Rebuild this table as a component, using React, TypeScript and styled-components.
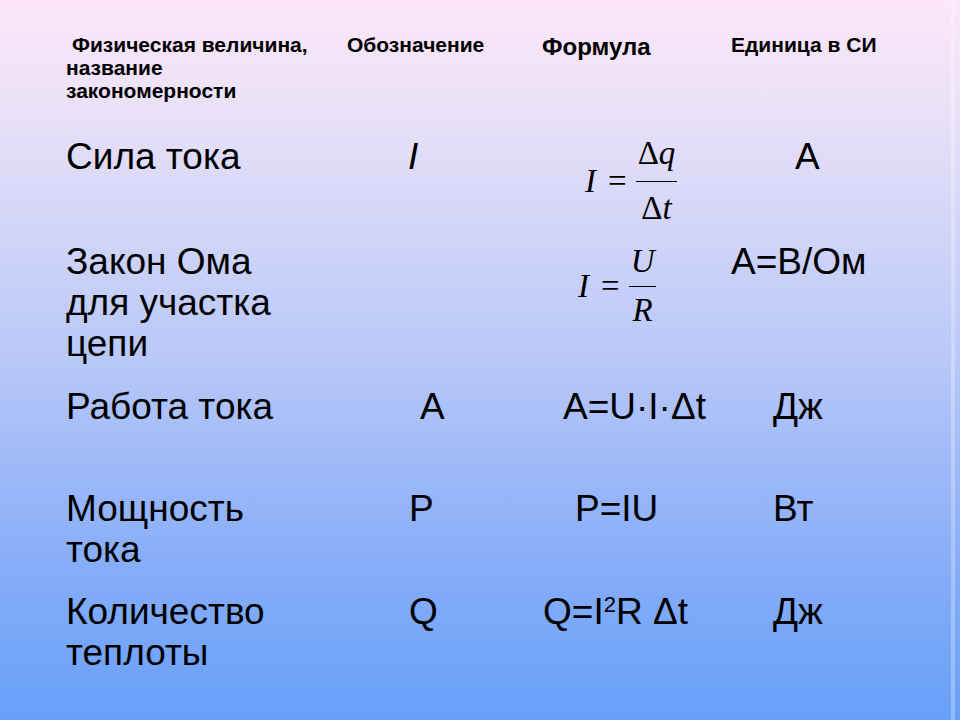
import styled, { createGlobalStyle } from 'styled-components';

const GlobalStyle = createGlobalStyle`
  html, body {
    margin: 0;
    padding: 0;
  }
  body {
    font-family: "Liberation Sans", Arial, sans-serif;
    color: #000;
  }
`;

const App = () => (
  <>
    <GlobalStyle />
    <Slide>
      <Table>
        <HeadCell $first>
          Физическая величина,
          <br />
          название
          <br />
          закономерности
        </HeadCell>
        <HeadCell>Обозначение</HeadCell>
        <HeadCell $big>Формула</HeadCell>
        <HeadCell>Единица в СИ</HeadCell>

        <Cell>Сила тока</Cell>
        <Cell $indent={61}>
          <Italic>I</Italic>
        </Cell>
        <Cell $indent={43}>
          <Formula>
            <Var>I</Var>
            <Eq>=</Eq>
            <Frac>
              <Num $gap={11}>
                Δ<Var>q</Var>
              </Num>
              <Bar />
              <Den $gap={10}>
                Δ<Var>t</Var>
              </Den>
            </Frac>
          </Formula>
        </Cell>
        <Cell $indent={64}>А</Cell>

        <Cell>
          Закон Ома
          <br />
          для участка
          <br />
          цепи
        </Cell>
        <Cell />
        <Cell $indent={36}>
          <Formula $lift={4}>
            <Var>I</Var>
            <Eq>=</Eq>
            <Frac>
              <Num $gap={8}>
                <Var>U</Var>
              </Num>
              <Bar />
              <Den $gap={7}>
                <Var>R</Var>
              </Den>
            </Frac>
          </Formula>
        </Cell>
        <Cell>А=В/Ом</Cell>

        <Cell>Работа тока</Cell>
        <Cell $indent={73}>А</Cell>
        <Cell $indent={21}>А=U·I·Δt</Cell>
        <Cell $indent={42}>Дж</Cell>

        <Cell>
          Мощность
          <br />
          тока
        </Cell>
        <Cell $indent={62}>P</Cell>
        <Cell $indent={33}>P=IU</Cell>
        <Cell $indent={42}>Вт</Cell>

        <Cell>
          Количество
          <br />
          теплоты
        </Cell>
        <Cell $indent={62}>Q</Cell>
        <Cell $indent={1}>
          Q=I<Sup>2</Sup>R Δt
        </Cell>
        <Cell $indent={42}>Дж</Cell>
      </Table>
    </Slide>
  </>
);

export default App;

const Slide = styled.div`
  box-sizing: border-box;
  width: 960px;
  height: 720px;
  padding: 33px 0 0 66px;
  overflow: hidden;
  background:
    linear-gradient(
      to right,
      transparent 951px,
      rgba(255, 255, 255, 0.28) 951px,
      rgba(255, 255, 255, 0.28) 955px,
      transparent 955px
    ),
    linear-gradient(
      to bottom,
      #fde6f8 0%,
      #ebe2f8 14%,
      #d0d4f8 33%,
      #b8c8f8 50%,
      #9cb8f8 66%,
      #84acf8 80%,
      #68a0f8 100%
    );
`;

const Table = styled.div`
  display: grid;
  grid-template-columns: 281px 195px 189px 1fr;
  grid-template-rows: 103px 105px 145px 102px 103px auto;
`;

const HeadCell = styled.div<{ $first?: boolean; $big?: boolean }>`
  font-size: ${({ $big }) => ($big ? '24px' : '21px')};
  font-weight: bold;
  line-height: ${({ $big }) => ($big ? '22px' : '23px')};
  padding-top: ${({ $big }) => ($big ? '3px' : '0')};
  text-indent: ${({ $first }) => ($first ? '6px' : '0')};
  white-space: nowrap;
`;

const Cell = styled.div<{ $indent?: number }>`
  font-size: 37px;
  line-height: 41px;
  padding-left: ${({ $indent }) => $indent ?? 0}px;
  white-space: nowrap;
`;

const Italic = styled.span`
  font-style: italic;
`;

const Sup = styled.span`
  font-size: 22px;
  vertical-align: 12px;
  line-height: 0;
`;

const Formula = styled.div<{ $lift?: number }>`
  display: inline-flex;
  align-items: center;
  margin-top: ${({ $lift }) => ($lift ? `${$lift}px` : '1px')};
  font-family: "Liberation Serif", "Times New Roman", serif;
  font-size: 33px;
  line-height: 1;
`;

const Var = styled.span`
  font-style: italic;
`;

const Eq = styled.span`
  margin: 0 9px 0 12px;
`;

const Frac = styled.span`
  display: inline-flex;
  flex-direction: column;
  align-items: center;
`;

const Num = styled.span<{ $gap: number }>`
  padding: 0 2px ${({ $gap }) => $gap}px;
`;

const Den = styled.span<{ $gap: number }>`
  padding: ${({ $gap }) => $gap}px 2px 0;
`;

const Bar = styled.span`
  align-self: stretch;
  height: 0;
  border-top: 1.5px solid #000;
`;
